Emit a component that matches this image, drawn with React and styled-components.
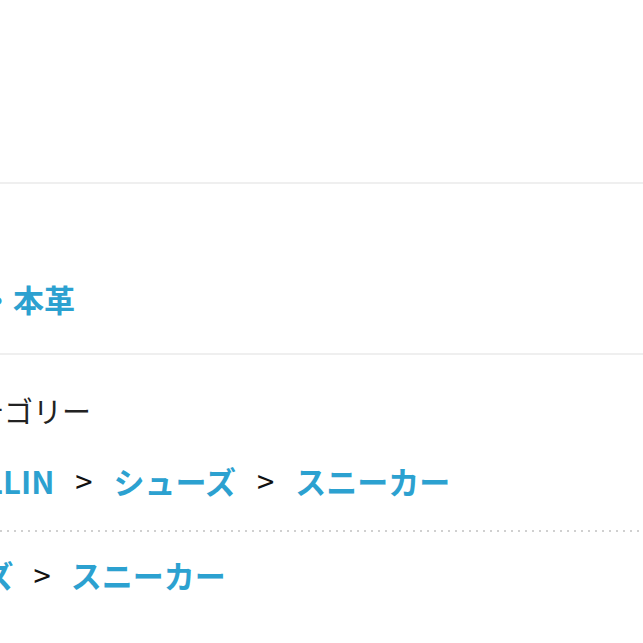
import React from 'react';
import styled, { createGlobalStyle } from 'styled-components';

const GlobalStyle = createGlobalStyle`
  html, body {
    margin: 0;
    padding: 0;
    background: #fff;
  }
  body {
    font-family: "Noto Sans CJK JP", "Noto Sans", sans-serif;
    color: #222;
  }
`;

const Page = styled.div`
  width: 643px;
  height: 643px;
  overflow: hidden;
  background: #fff;
`;

const Blank = styled.div`
  height: 182px;
`;

const Section = styled.section`
  border-top: 2px solid #efefef;
  padding: ${(props) => props.pad};
`;

/* rows are shifted left: the screenshot is cropped from a wider page */
const Row = styled.div`
  display: flex;
  align-items: center;
  white-space: nowrap;
  margin-left: ${(props) => props.shift}px;
  font-size: 31px;
  line-height: 45px;
`;

const Label = styled.div`
  margin-left: ${(props) => props.shift}px;
  font-size: 29px;
  line-height: 37px;
  color: #222;
  white-space: nowrap;
  margin-bottom: 29px;
`;

const Link = styled.a`
  color: #2ca1d0;
  font-weight: 700;
  text-decoration: none;
`;

const Sep = styled.span`
  color: #111;
  font-weight: 400;
  margin: 0 ${(props) => props.gap}px;
`;

const Dotted = styled.div`
  height: 2px;
  margin: 27px 0 20px;
  background-image: linear-gradient(to right, #d0d0d0 2px, transparent 2px);
  background-size: 7px 2px;
  background-repeat: repeat-x;
`;

const Crumbs = ({ items, shift, gap }) => (
  <Row shift={shift}>
    {items.map((item, i) => (
      <React.Fragment key={i}>
        {i > 0 && <Sep gap={gap}>&gt;</Sep>}
        <Link href="#">{item}</Link>
      </React.Fragment>
    ))}
  </Row>
);

export default function App() {
  return (
    <Page>
      <GlobalStyle />
      <Blank />
      <Section pad="92px 0 32px">
        <Row shift={-111}>
          <Link href="#">レザー・本革</Link>
        </Row>
      </Section>
      <Section pad="37px 0 0">
        <Label shift={-54}>カテゴリー</Label>
        <Crumbs items={['STELLIN', 'シューズ', 'スニーカー']} shift={-72} gap={21} />
        <Dotted />
        <Crumbs items={['シューズ', 'スニーカー']} shift={-109} gap={20} />
      </Section>
    </Page>
  );
}
